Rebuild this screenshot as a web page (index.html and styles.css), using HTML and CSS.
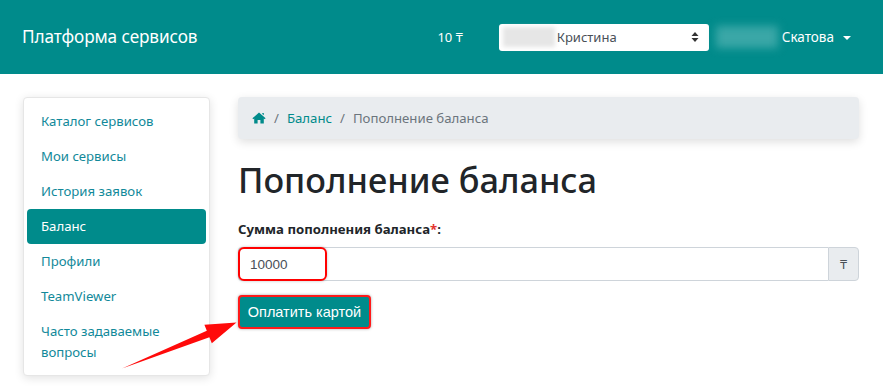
FILE: index.html
```html
<!DOCTYPE html>
<html lang="ru">
<head>
<meta charset="utf-8">
<title>Пополнение баланса</title>
<link rel="stylesheet" href="styles.css">
</head>
<body>
<header class="navbar">
  <div class="brand">Платформа сервисов</div>
  <div class="nav-right">
    <div class="balance">10 ₸</div>
    <div class="select">
      <span class="blur-gray"></span>
      <span class="select-text">Кристина</span>
      <svg class="updown" width="8" height="12" viewBox="0 0 8 12"><path d="M4 1 L7.5 5 H0.5 Z M4 11 L7.5 7 H0.5 Z" fill="#333"/></svg>
    </div>
    <div class="user">
      <span class="blur-teal"></span>
      <span class="user-name">Скатова</span>
      <span class="caret"></span>
    </div>
  </div>
</header>
<div class="page">
  <aside class="sidebar">
    <a class="side-item">Каталог сервисов</a>
    <a class="side-item">Мои сервисы</a>
    <a class="side-item">История заявок</a>
    <a class="side-item active">Баланс</a>
    <a class="side-item">Профили</a>
    <a class="side-item">TeamViewer</a>
    <a class="side-item">Часто задаваемые вопросы</a>
  </aside>
  <main class="main">
    <nav class="breadcrumb">
      <svg class="home" width="14" height="12" viewBox="0 0 14 12"><path d="M7 0.5 L13.6 6.3 L12.7 7.3 L11.8 6.5 V11.5 H8.4 V8 H5.6 V11.5 H2.2 V6.5 L1.3 7.3 L0.4 6.3 Z M10.3 1 H11.8 V3.3 L10.3 2 Z" fill="#008b8b"/></svg>
      <span class="sep">/</span>
      <a class="crumb">Баланс</a>
      <span class="sep">/</span>
      <span class="crumb-active">Пополнение баланса</span>
    </nav>
    <h1 class="title">Пополнение баланса</h1>
    <label class="label">Сумма пополнения баланса<span class="req">*</span>:</label>
    <div class="input-group">
      <div class="input">10000</div>
      <div class="append">₸</div>
      <span class="mark"></span>
    </div>
    <button class="btn">Оплатить картой</button>
  </main>
</div>
<svg class="arrow" width="883" height="387" viewBox="0 0 883 387"><polygon points="122,368.5 206.8,330.7 204.4,324.7 236.5,322.5 211.8,343.3 209.4,337.3" fill="#ff0a0a"/></svg>
</body>
</html>
```
FILE: styles.css
```css
* { box-sizing: border-box; }
html, body { margin: 0; padding: 0; }
body {
  font-family: "Noto Sans", "Open Sans", sans-serif;
  font-size: 13px;
  color: #212529;
  background: #fff;
  width: 883px;
  height: 387px;
  overflow: hidden;
  position: relative;
}
.navbar {
  height: 74px;
  background: #008b8b;
  display: flex;
  align-items: center;
  padding: 0 32px 0 22px;
  color: #fff;
}
.brand { font-size: 17.2px; letter-spacing: -0.1px; margin-top: -1px; }
.nav-right { margin-left: auto; display: flex; align-items: center; }
.balance { font-size: 13px; margin-right: 36px; }
.select {
  width: 210px;
  height: 27px;
  background: #fff;
  border-radius: 3px;
  display: flex;
  align-items: center;
  padding: 0 10px 0 4px;
  color: #495057;
}
.blur-gray {
  width: 52px; height: 20px; background: #e6e6e6;
  filter: blur(2px); margin-right: 2px;
}
.select-text { flex: 1; font-size: 13px; }
.updown { display: block; }
.user { display: flex; align-items: center; margin-left: 7px; }
.blur-teal {
  width: 62px; height: 22px; background: #3aa7a7;
  filter: blur(4px); margin-right: 4px;
}
.user-name { font-size: 13.5px; }
.caret {
  width: 0; height: 0; margin-left: 9px; margin-top: 1px;
  border-left: 4px solid transparent; border-right: 4px solid transparent;
  border-top: 4px solid #fff;
}
.page {
  display: flex;
  padding: 23px 24px 0 23px;
  gap: 28px;
  align-items: flex-start;
}
.sidebar {
  width: 187px;
  background: #fff;
  border: 1px solid #e6e6e6;
  border-radius: 4px;
  box-shadow: 0 2px 10px rgba(0,0,0,0.12);
  padding: 6px 3px 5px;
  display: flex;
  flex-direction: column;
}
.side-item {
  display: block;
  padding: 7px 15px 7px 14px;
  line-height: 21px;
  color: #12899a;
  font-size: 13.2px;
  border-radius: 4px;
}
.side-item.active { background: #008b8b; color: #fff; }
.main { flex: 1; display: flex; flex-direction: column; align-items: flex-start; }
.breadcrumb {
  width: 100%;
  height: 42px;
  background: #e9ecef;
  border-radius: 4px;
  box-shadow: 0 3px 10px rgba(0,0,0,0.13);
  display: flex;
  align-items: center;
  padding: 0 14px;
  font-size: 13.2px;
}
.home { display: block; margin-top: -1px; }
.sep { color: #6c757d; margin: 0 8px; }
.crumb { color: #008b8b; }
.crumb-active { color: #6c757d; }
.title {
  font-size: 34.3px;
  font-weight: 500;
  margin: 17px 0 0;
  line-height: 48px;
  color: #212529;
}
.label { font-weight: 700; font-size: 13.2px; margin-top: 15px; line-height: 20px; }
.req { color: #e3342f; }
.input-group {
  position: relative;
  width: 100%;
  height: 34px;
  margin-top: 8px;
  display: flex;
}
.input {
  flex: 1;
  border: 1px solid #ced4da;
  border-right: none;
  border-radius: 4px 0 0 4px;
  padding: 0 11px;
  display: flex;
  align-items: center;
  font-family: "Liberation Sans", Arial, sans-serif;
  font-size: 13.5px;
  color: #495057;
}
.append {
  width: 31px;
  background: #e9ecef;
  border: 1px solid #ced4da;
  border-radius: 0 4px 4px 0;
  display: flex; align-items: center; justify-content: center;
  font-size: 13px; color: #495057;
}
.mark {
  position: absolute;
  left: 0; top: 0;
  width: 89px; height: 34px;
  border: 2px solid #ff0000;
  border-radius: 6px;
  box-shadow: 0 0 3px rgba(0,0,0,0.25);
}
.btn {
  margin-top: 14px;
  height: 34px;
  width: 133px;
  background: #008b8b;
  color: #fff;
  border: 2px solid #ff1a1a;
  border-radius: 4px;
  font-family: "Liberation Sans", Arial, sans-serif;
  font-size: 14.5px;
  padding: 0;
  box-shadow: 0 0 3px rgba(0,0,0,0.35);
}
.arrow { position: absolute; left: 0; top: 0; pointer-events: none; }
```
